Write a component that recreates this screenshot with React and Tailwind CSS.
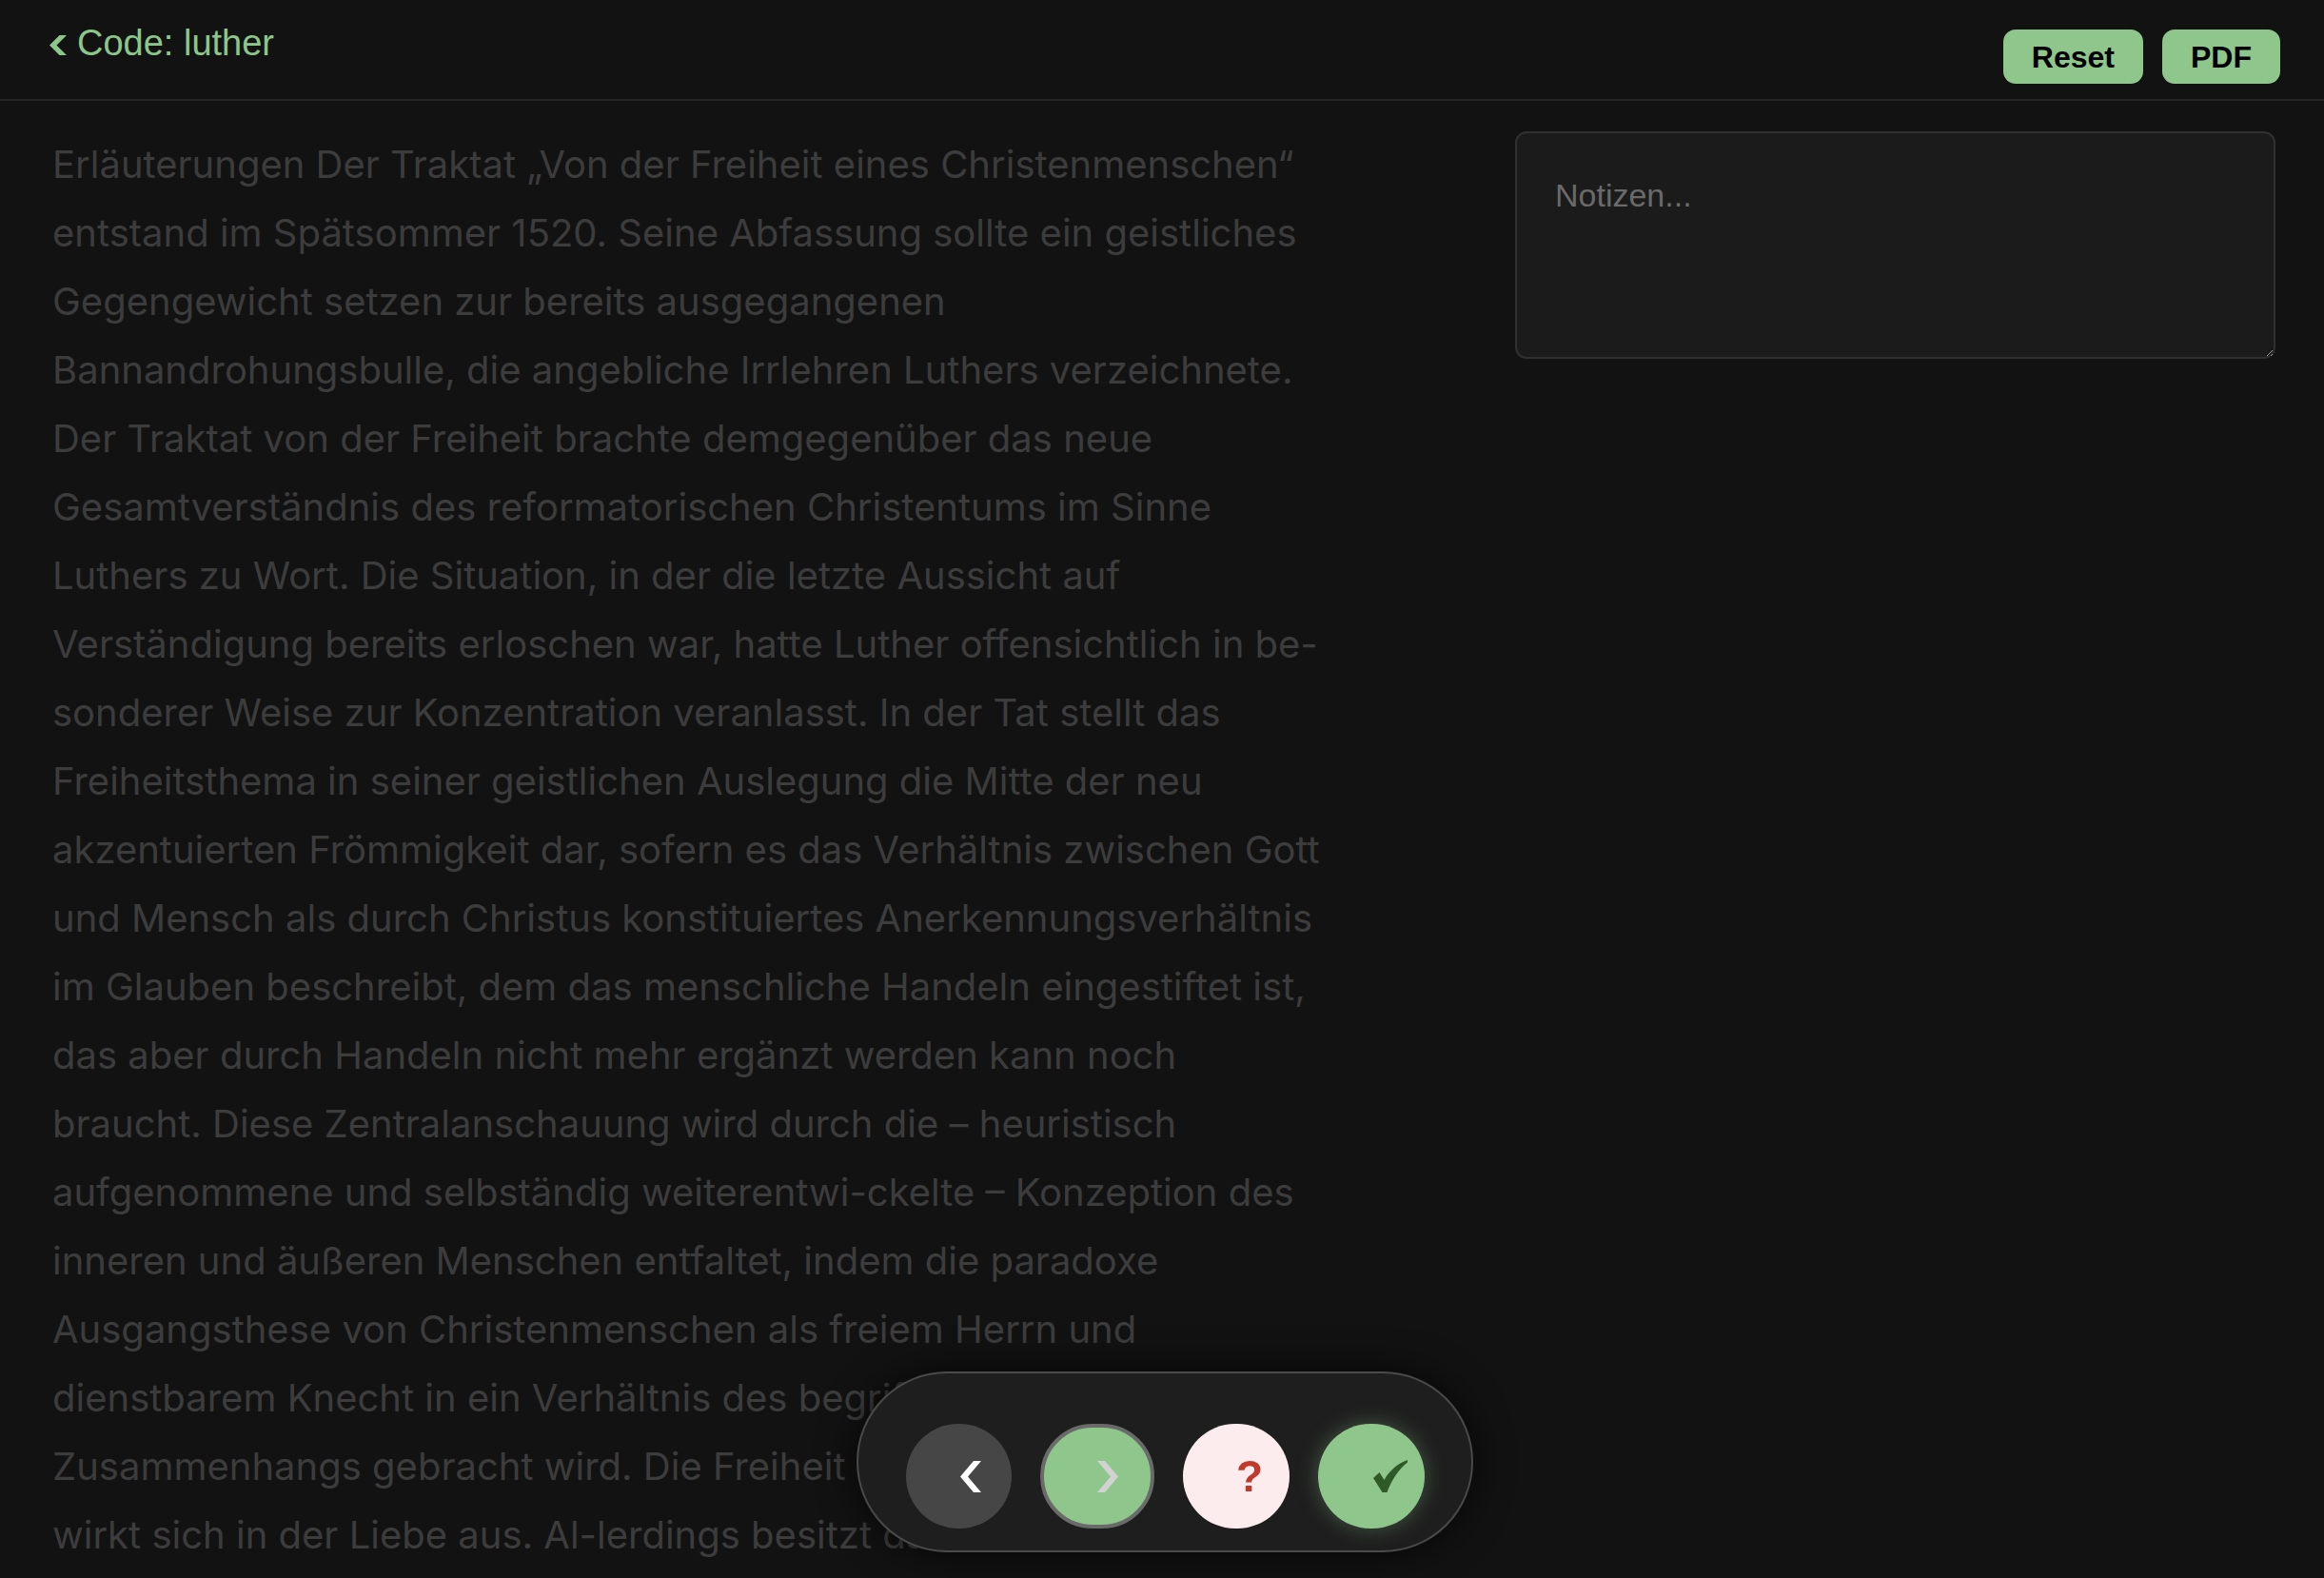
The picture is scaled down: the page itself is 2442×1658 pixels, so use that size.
import { useState } from 'react'

// Commentary text, broken the way the source PDF breaks it
const LINES = [
  'Erläuterungen Der Traktat „Von der Freiheit eines Christenmenschen“',
  'entstand im Spätsommer 1520. Seine Abfassung sollte ein geistliches',
  'Gegengewicht setzen zur bereits ausgegangenen',
  'Bannandrohungsbulle, die angebliche Irrlehren Luthers verzeichnete.',
  'Der Traktat von der Freiheit brachte demgegenüber das neue',
  'Gesamtverständnis des reformatorischen Christentums im Sinne',
  'Luthers zu Wort. Die Situation, in der die letzte Aussicht auf',
  'Verständigung bereits erloschen war, hatte Luther offensichtlich in be-',
  'sonderer Weise zur Konzentration veranlasst. In der Tat stellt das',
  'Freiheitsthema in seiner geistlichen Auslegung die Mitte der neu',
  'akzentuierten Frömmigkeit dar, sofern es das Verhältnis zwischen Gott',
  'und Mensch als durch Christus konstituiertes Anerkennungsverhältnis',
  'im Glauben beschreibt, dem das menschliche Handeln eingestiftet ist,',
  'das aber durch Handeln nicht mehr ergänzt werden kann noch',
  'braucht. Diese Zentralanschauung wird durch die – heuristisch',
  'aufgenommene und selbständig weiterentwi-ckelte – Konzeption des',
  'inneren und äußeren Menschen entfaltet, indem die paradoxe',
  'Ausgangsthese von Christenmenschen als freiem Herrn und',
  'dienstbarem Knecht in ein Verhältnis des begrifflichen',
  'Zusammenhangs gebracht wird. Die Freiheit des Glaubens',
  'wirkt sich in der Liebe aus. Al-lerdings besitzt das Thema',
]

const sans = "font-['Liberation_Sans',Arial,sans-serif]"

function Chevron({ dir = 'left', className }) {
  const pts = dir === 'left'
    ? '14,0 22,0 8,16.5 22,33 14,33 0,16.5'
    : '0,0 8,0 22,16.5 8,33 0,33 14,16.5'
  return (
    <svg viewBox="0 0 22 33" className={className} fill="currentColor">
      <polygon points={pts} />
    </svg>
  )
}

function Check({ className }) {
  return (
    <svg viewBox="0 0 36 34" className={className} fill="currentColor">
      <path d="M0 19 L6.5 13 L11.5 21 C17 11 26 3.5 36 0 L36 2.5 C27 9.5 19.5 20.5 14.5 34 L9.5 34 Z" />
    </svg>
  )
}

export default function App() {
  const [notes, setNotes] = useState('')

  return (
    <div className="h-[1658px] overflow-hidden bg-[#121212] font-['Inter',sans-serif]">

      {/* Top bar */}
      <header className="h-[106px] flex items-start justify-between pl-[52px] pr-[46px] border-b-2 border-[#262626]">
        <button className={`mt-[26px] flex items-baseline gap-[11px] text-[#8dc68a] text-[38px] leading-none ${sans}`}>
          <svg viewBox="0 0 18 21" className="w-[18px] h-[21px]" fill="currentColor">
            <polygon points="10.5,0 18,0 7.5,10.5 18,21 10.5,21 0,10.5" />
          </svg>
          <span>Code: luther</span>
        </button>
        <div className="mt-[31px] flex gap-[20px]">
          <button className={`h-[57px] px-[30px] rounded-[13px] bg-[#8fc68b] text-black text-[32px] font-bold flex items-center ${sans}`}>
            Reset
          </button>
          <button className={`h-[57px] px-[30px] rounded-[13px] bg-[#8fc68b] text-black text-[32px] font-bold flex items-center ${sans}`}>
            PDF
          </button>
        </div>
      </header>

      <main className="flex justify-between pl-[55px] pr-[51px]">
        {/* Reading text */}
        <article className="pt-[31px] text-[40px] leading-[72px] text-[#3c3c3c]">
          {LINES.map((line, i) => (
            <div key={i} className="whitespace-nowrap">{line}</div>
          ))}
        </article>

        {/* Notes */}
        <div className="pt-[32px]">
          <textarea
            value={notes}
            onChange={e => setNotes(e.target.value)}
            placeholder="Notizen..."
            className={`block w-[799px] h-[239px] rounded-[12px] border-2 border-[#303030] bg-[#1b1b1b] pt-[40px] px-[40px] text-[34px] text-[#cfcfcf] placeholder:text-[#6a6a6a] outline-none ${sans}`}
          />
        </div>
      </main>

      {/* Card controls */}
      <div className="fixed bottom-[27px] left-[calc(50%+3px)] -translate-x-1/2 flex items-center gap-[30px] pl-[50px] pr-[49px] pt-[53px] pb-[23px] rounded-full border-2 border-[#4a4a4a] bg-[#1e1e1e] shadow-[0_0_40px_rgba(0,0,0,0.7)]">
        <button className="w-[111px] h-[110px] rounded-full bg-[#464646] text-white flex items-center justify-center">
          <Chevron dir="left" className="w-[22px] h-[33px] translate-x-[12px]" />
        </button>
        <button className="w-[120px] h-[110px] rounded-full bg-[#8fc68b] border-[4px] border-[#6a6a6a] text-[#d2d2d2] flex items-center justify-center">
          <Chevron dir="right" className="w-[22px] h-[33px] translate-x-[11px]" />
        </button>
        <button className={`w-[112px] h-[110px] rounded-full bg-[#fcecee] text-[#c0392b] text-[46px] font-bold leading-none flex items-center justify-center ${sans}`}>
          <span className="translate-x-[14px]">?</span>
        </button>
        <button className="w-[112px] h-[110px] rounded-full bg-[#8fc68b] text-[#2d5a27] flex items-center justify-center shadow-[0_0_22px_rgba(143,198,139,0.35)]">
          <Check className="w-[36px] h-[34px] translate-x-[20px]" />
        </button>
      </div>
    </div>
  )
}
